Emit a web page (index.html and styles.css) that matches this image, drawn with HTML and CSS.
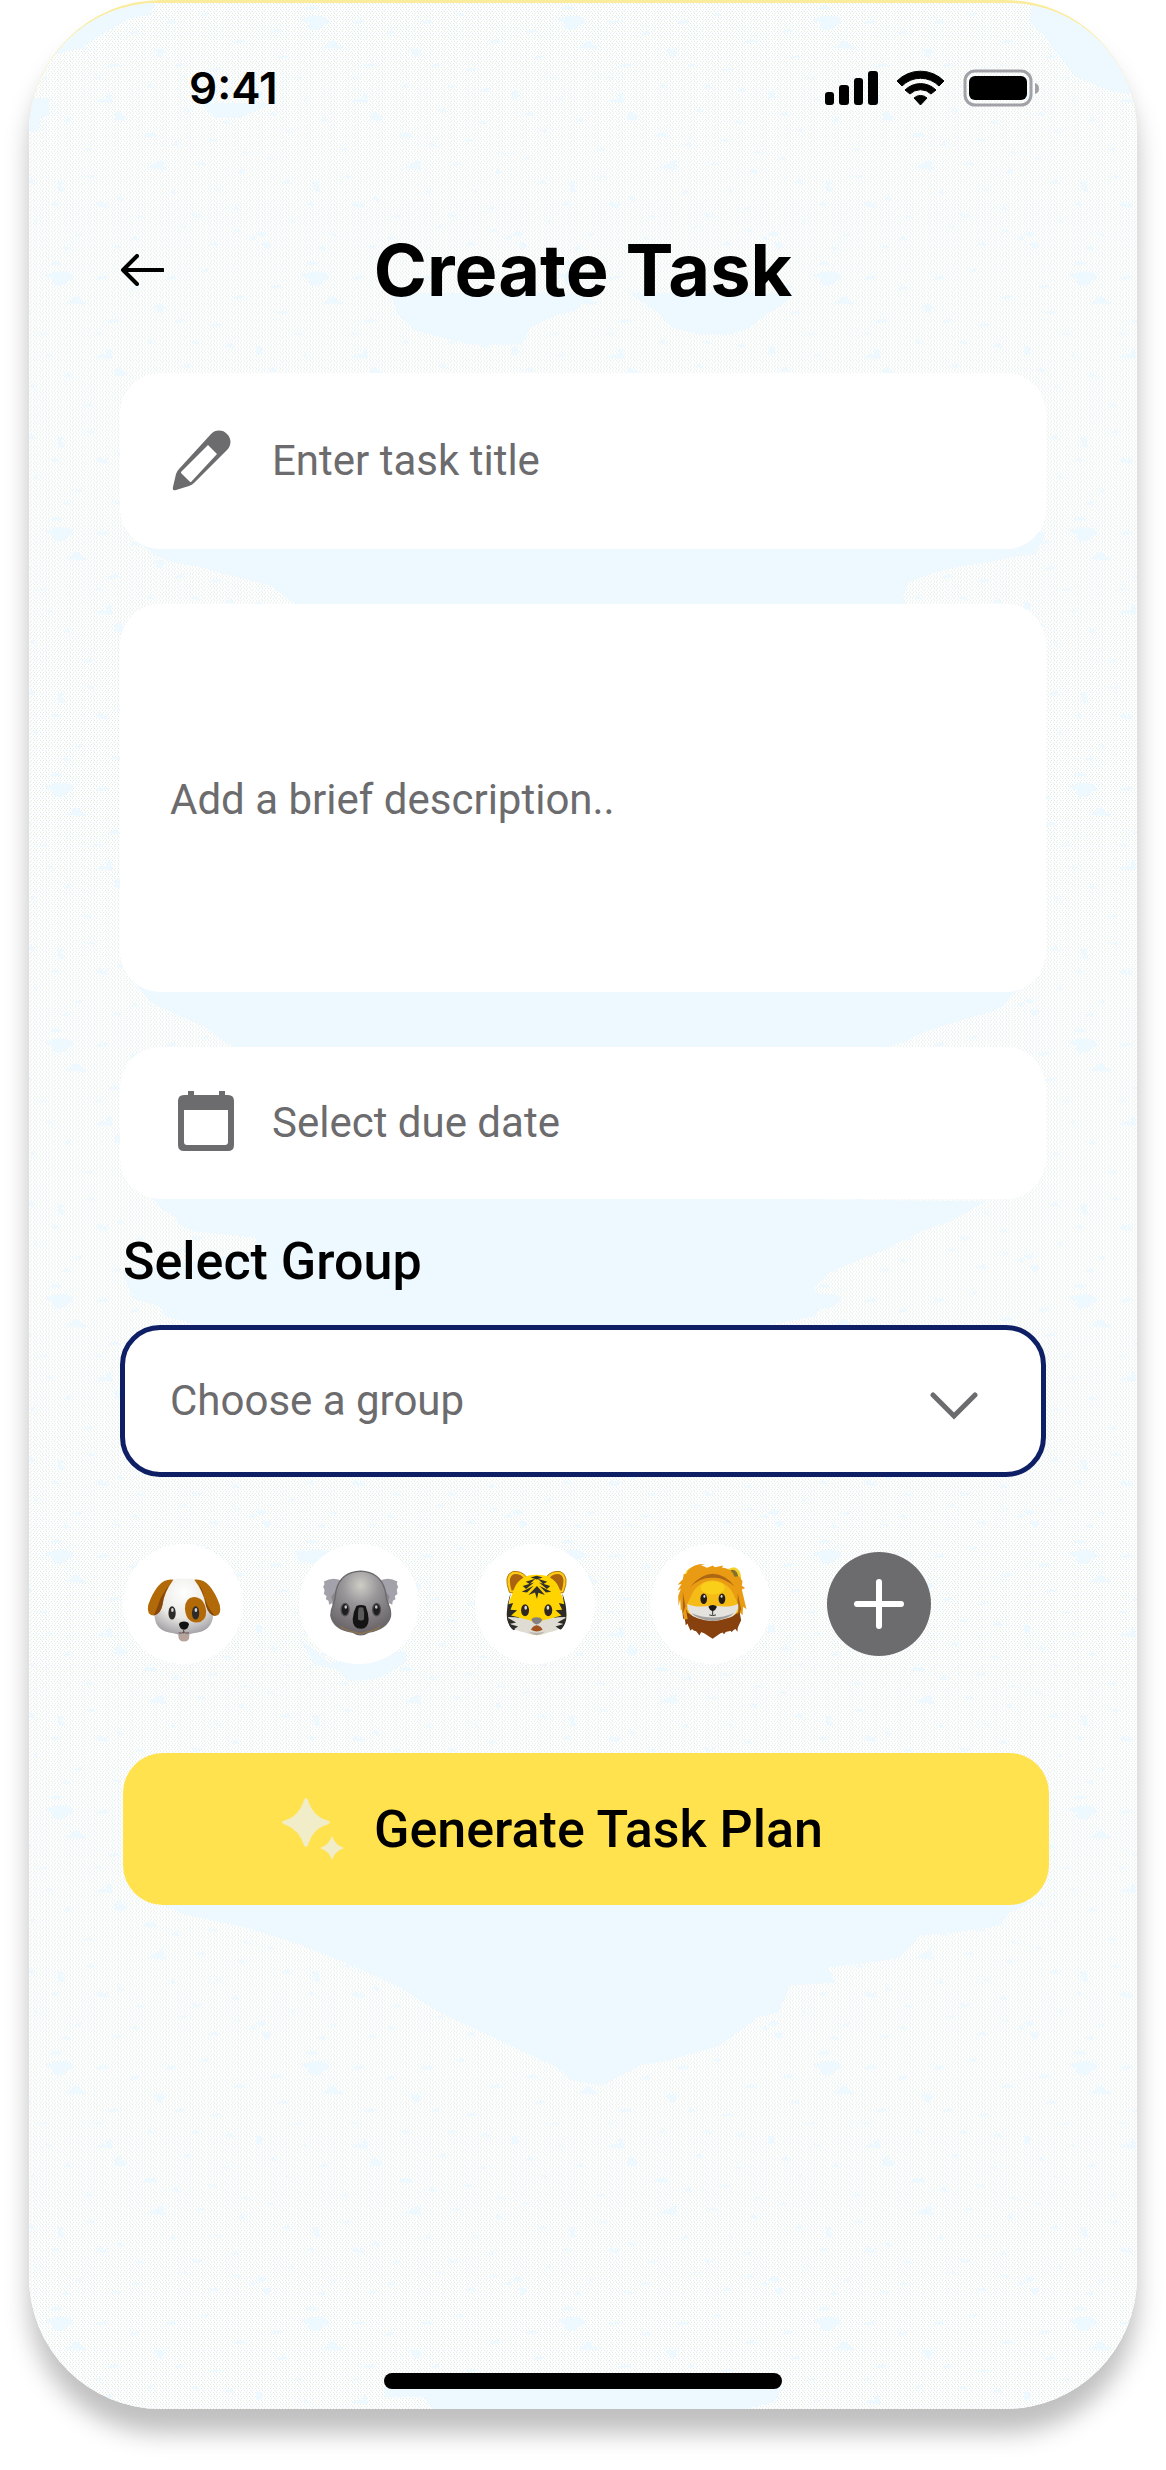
FILE: index.html
```
<!DOCTYPE html>
<html lang="en">

<head>
    <meta charset="UTF-8">
    <meta name="viewport" content="width=device-width, initial-scale=1.0">
    <title>Create Task</title>
    <link rel="stylesheet" href="styles.css">
</head>

<body>
    <div class="phone">
        <!-- Speckled background -->
        <svg class="texture" viewBox="29 0 1108 2409" preserveAspectRatio="none" aria-hidden="true">
            <defs>
                <pattern id="grain" width="6" height="4" patternUnits="userSpaceOnUse" shape-rendering="crispEdges">
                    <rect width="6" height="4" fill="#ffffff" />
                    <path d="M0 0h1v1h-1zM3 0h1v1h-1zM1 2h1v1h-1zM4 2h1v1h-1z" fill="#e6ebe0" />
                    <path d="M2 1h1v1h-1zM5 3h1v1h-1zM0 3h1v1h-1zM4 1h1v1h-1z" fill="#edf8ff" />
                </pattern>
                <pattern id="flecks" width="256" height="256" patternUnits="userSpaceOnUse">
                    <g fill="#edf8ff">
                        <path d="M46 15h6l2-2h12l6 3 1 4-6 2-2 4-8 1-5-3 1-4-7-2z" />
                        <path d="M49 6l4-3h6l4 3zM66 45l5-3 3-4h5l2 4 5 2v2z" />
                        <path d="M156 46h7l2 3-3 5h-4l-1-4-3-2zM96 99l4-3h7v-5h4l1 9z" />
                        <path d="M115 117v-6l4-3 3 4 5 2-4 4zM142 134l4-4h8l3 4zM148 165l6-3 6-4h4v5l2 4z" />
                        <path d="M57 179h6l-1 5 3 5h-6l-1-5zM191 210l4 1 3 2 5-3-3 4-5 1z" />
                        <path d="M0 88h6l1 7-8 1zM0 232l5-4 6 3-4 3zM6 240h8l1 4-5 3zM249 236l5-4 2 5z" />
                        <path d="M96 203l3-5 4 4 5-3-1 6zM118 193l6 4-2 2-5-3zM176 62l6-2 2 3-8 1z" />
                        <path d="M22 54l7-2 4 2-10 2zM96 19l10-2 4 2-12 2zM130 30l6-3 3 3-8 2zM200 12l8-2v3z" />
                        <path d="M210 66l9-1 2 2-11 1zM234 38l7-2 4 3-11 1zM182 108l6-3 3 5zM220 120l8-2 3 3z" />
                        <path d="M28 128l6-2v4zM82 147l9-2 2 3zM196 162l7-3 3 3zM238 170l4-5 4 6zM32 219l6-2v3z" />
                        <path d="M130 236l5-3 3 4zM170 190l4-4 2 5zM74 232l8-2-2 4zM10 156l6-2 3 3zM214 186l6 1 2 4z" />
                        <path d="M178 225l7-2 3 2zM90 75l10-1 3 2zM146 84l5-4 2 5zM44 97l6-2 2 3zM230 206l8-3v4z" />
                        <path d="M14 28l9-2 3 3-11 1zM108 62l8-2 5 3-12 1zM166 18l9-1 2 3-10 1zM224 88l7-4 3 5z" />
                        <path d="M64 118l5-4 3 5zM206 138l9-2 3 3zM26 180l6-4 3 5zM134 214l8-2 3 3zM232 228l8-1 2 3z" />
                        <path d="M50 202l5-3 4 4zM172 142l5-4 3 6zM12 112l6-4 3 5zM84 174l8-2 4 3zM110 244l10-1v3z" />
                        <path d="M190 84l7-2 3 4zM240 150l6-2 4 3zM36 76l9-2 2 2zM60 246l7-3 3 4zM208 242l8-3 3 4z" />
                    </g>
                </pattern>
            </defs>
            <rect x="29" width="1108" height="2409" fill="url(#grain)" />
            <rect x="29" width="1108" height="2409" fill="url(#flecks)" />
            <g fill="#edf8ff">
                <path d="M29 0H155L150 12L130 15L110 27L95 35L80 45L60 50L29 62zM29 95H48L50 112L40 116L39 128H29z" />
                <path d="M1032 0L1030 20L1045 33L1050 42L1065 60L1075 73L1110 88L1137 92V0z" />
                <path d="M200 100H275L260 106L240 115H215z" />
                <path d="M390 290H595L575 308L555 313L530 325L522 342H470L415 328L398 312z" />
                <path d="M630 290H795L780 304L765 312L750 325L730 332H700L672 325L660 312z" />
                <path d="M125 530L155 553L172 560L198 564L230 573L270 583L298 604H907L903 596L908 580L935 570L960 564L990 560L1010 555L1036 552L1046 530z" />
                <path d="M130 975L150 1000L175 1012L203 1024L225 1040L238 1048H880L905 1040L920 1032L940 1025L990 1010L1003 1005L1012 993L1040 975z" />
                <path d="M145 1190L165 1210L175 1213L178 1222L195 1230L256 1236V1250L122 1270L133 1297L160 1305L165 1315L185 1320L195 1326H755L792 1319L815 1315L820 1308L835 1300L813 1288L830 1270L885 1248L920 1230L950 1220L985 1200z" />
                <path d="M155 1900L185 1914L250 1928L300 1944L345 1962L395 1984L440 2012L500 2040L555 2066L572 2080L602 2085L640 2065L668 2060L720 2045L757 2017L778 2012L790 1985L835 1982L828 1967L885 1960L900 1957L920 1935L955 1932L1000 1925L1010 1912L1035 1900z" />
                <path d="M385 2386V2397H424L432 2409H745L775 2402L782 2386z" />
                <path d="M296 1550H330L310 1562L298 1560zM300 1638L330 1662L405 1650L406 1660L392 1670L376 1678L350 1680L336 1668L315 1664L310 1655z" />
            </g>
        </svg>

        <div class="status-bar">
            <span class="time">9:41</span>
            <svg class="status-icons" width="216" height="38" viewBox="824 69 216 38" aria-hidden="true">
                <rect x="825" y="92" width="9" height="13" rx="3" />
                <rect x="839" y="85" width="10" height="20" rx="3" />
                <rect x="854" y="78" width="9" height="27" rx="3" />
                <rect x="868" y="71" width="10" height="34" rx="3" />
                <path d="M897 81a33 33 0 0 1 47 0l-5 5a26 26 0 0 0-37 0z" stroke="#000" stroke-linejoin="round" />
                <path d="M905 90a22 22 0 0 1 31 0l-5 4a15 15 0 0 0-21 0z" stroke="#000" stroke-linejoin="round" />
                <path d="M914 98a9.500 9.500 0 0 1 13 0l-6.500 7z" stroke="#000" stroke-linejoin="round" />
                <rect x="965" y="71" width="66" height="34" rx="10" fill="none" stroke="#a3a1a8" stroke-width="3" />
                <rect x="969" y="76" width="58" height="24" rx="6" />
                <path d="M1035 83q4 1 4 5.500t-4 5.500z" fill="#a3a1a8" />
            </svg>
        </div>

        <div class="header">
            <button type="button" class="back-btn" aria-label="Back">
                <svg width="44" height="32" viewBox="0 0 44 32" aria-hidden="true">
                    <path d="M43 16H3M17 2L3 16l14 14" />
                </svg>
            </button>
            <h1>Create Task</h1>
        </div>

        <form class="task-form">
            <label class="card card-title">
                <svg class="card-icon" width="64" height="64" viewBox="0 0 64 64" aria-hidden="true">
                    <path fill-rule="evenodd" d="M41 5a11 11 0 0 1 16 0 11 11 0 0 1 0 16L24 54q-2 2-5 3L6 61q-4 1-3-3L6 45q1-3 3-5zM38 16L11 43v1l9 9h1L47 25z" />
                    <path d="M8 42l14 13L3 61z" />
                </svg>
                <input type="text" placeholder="Enter task title" aria-label="Task title">
            </label>

            <textarea class="card card-description" placeholder="Add a brief description.." aria-label="Description"></textarea>

            <label class="card">
                <svg class="card-icon" width="64" height="64" viewBox="-7 2 64 64" aria-hidden="true">
                    <path fill-rule="evenodd" d="M14 0q3 0 3 3v3h25V3q0-3 3-3t3 3v3h3q6 0 6 6v44q0 6-6 6H7q-6 0-6-6V12q0-6 6-6h4V3q0-3 3-3zM7 21v32q0 3 3 3h38q3 0 3-3V21z" />
                </svg>
                <input type="text" placeholder="Select due date" aria-label="Due date">
            </label>

            <label class="group-label" for="group">Select Group</label>
            <div class="select-box">
                <select id="group" class="card">
                    <option>Choose a group</option>
                </select>
                <svg class="chevron" width="48" height="28" viewBox="0 0 48 28" aria-hidden="true">
                    <path d="M3 3l21 21L45 3" />
                </svg>
            </div>

            <div class="actions">
                <div class="avatars">
                    <button type="button" class="avatar" aria-label="Dog">
                        <svg viewBox="70 102 362 362" aria-hidden="true">
                            <defs>
                                <radialGradient id="dogFur" cx="50%" cy="25%" r="75%">
                                    <stop offset="0" stop-color="#ffffff" />
                                    <stop offset=".6" stop-color="#eae9e4" />
                                    <stop offset="1" stop-color="#a5a3a8" />
                                </radialGradient>
                            </defs>
                            <path d="M237 368h33v12q0 16-16 16t-17-16z" fill="#b9a49c" />
                            <path d="M190 235q4-29 64-29t64 29q3 30 14 45 10 15 10 35-2 52-60 56-30 10-60 0-55-4-57-54 0-20 12-37 11-14 13-45z" fill="url(#dogFur)" />
                            <path d="M222 210q-46-8-76 76-6 30 17 32 20-4 26-32 6-40 33-76zM285 210q46-8 77 76 6 32-14 33-20-4-28-32-8-42-35-77z" fill="#b26a08" />
                            <path d="M189 286q4-40 28-70-18 22-34 50-8 25-20 52 20-4 26-32zM320 287q-4-40-22-66 8 20 20 46 8 30 30 52-20-2-28-32z" fill="#86470d" />
                            <path d="M283 262q-25 2-26 34 2 42 35 43 30-3 29-36-6-40-38-41z" fill="#b26a08" />
                            <ellipse cx="218" cy="310" rx="11" ry="20" fill="#2c2b29" />
                            <ellipse cx="289" cy="310" rx="11" ry="20" fill="#2c2b29" />
                            <ellipse cx="219" cy="301" rx="4" ry="6" fill="#d5d5d5" />
                            <ellipse cx="290" cy="301" rx="4" ry="6" fill="#d5d5d5" />
                            <path d="M239 344q2-8 15-8t15 8q-2 15-15 17-13-2-15-17z" fill="#111" />
                            <path d="M253 360v12m-15-2q10 4 15-4 5 8 16 4" fill="none" stroke="#6a4a3c" stroke-width="3" />
                        </svg>
                    </button>
                    <button type="button" class="avatar" aria-label="Koala">
                        <svg viewBox="597 102 362 362" aria-hidden="true">
                            <defs>
                                <radialGradient id="koalaFur" cx="50%" cy="22%" r="75%">
                                    <stop offset="0" stop-color="#cfcdc6" />
                                    <stop offset=".4" stop-color="#99969a" />
                                    <stop offset="1" stop-color="#696467" />
                                </radialGradient>
                            </defs>
                            <path d="M672 215q30-16 58 0l-6 66-24 8-4-8-8 4-2-12-8-4 2-10-8-6 2-12-4-10 4-8zM894 215q-30-16-58 0l6 66 22 8 6-8 8 4 2-12 8-4-2-10 8-6-2-12 4-10-4-8z" fill="#a3a1a9" />
                            <path d="M720 226l-26 36 8 20 18-4zM842 226l28 34-6 20-20-2z" fill="#8b878c" />
                            <path d="M783 184q58 2 74 58 2 24 10 44 8 16 6 34-10 38-66 48-24 16-48 0-58-8-66-50 0-16 8-34 6-20 8-42 14-56 74-58z" fill="url(#koalaFur)" stroke="#6c686b" stroke-width="4" />
                            <ellipse cx="736" cy="300" rx="14" ry="21" fill="#555154" />
                            <ellipse cx="831" cy="300" rx="14" ry="21" fill="#555154" />
                            <ellipse cx="736" cy="300" rx="10" ry="17" fill="#1e1e1e" />
                            <ellipse cx="831" cy="300" rx="10" ry="17" fill="#1e1e1e" />
                            <ellipse cx="738" cy="292" rx="4" ry="5" fill="#c5c5c5" />
                            <ellipse cx="830" cy="292" rx="4" ry="5" fill="#c5c5c5" />
                            <path d="M770 289q14-6 28 0 8 20 9 40 0 28-23 29-26-1-25-30 1-20 11-39z" fill="#141414" />
                            <path d="M777 294q8-3 14 0 4 14 2 36-8 6-18 0-1-22 2-36z" fill="#5c5b5c" />
                            <path d="M722 350q26 18 44 18 17 8 34 0 26-4 42-18" fill="none" stroke="#8d754b" stroke-width="4" />
                        </svg>
                    </button>
                    <button type="button" class="avatar" aria-label="Tiger">
                        <svg viewBox="77 102 362 362" aria-hidden="true">
                            <path d="M181 248q-20-52 10-63 26-3 41 16l-30 50zM344 248q20-50-10-63-26-3-42 16l36 50z" fill="#fccc16" stroke="#b97a10" stroke-width="3" />
                            <path d="M188 244q-14-44 6-51 20-2 30 12l-22 30zM338 244q14-44-6-51-20-2-30 12l24 30z" fill="#aa6310" />
                            <path d="M263 195q60 0 72 54 16 30 18 68 0 42-54 50-36 20-72 0-54-10-54-52 4-38 18-66 14-54 72-54z" fill="#ffd400" />
                            <path d="M185 250q-16 40-11 80 6 24 20 32l18-12-16-12 14-14-24-6 18-16-20-2 8-20-14 4zM340 250q16 40 12 80-4 20-16 30l-22-8 14-14-12-14 22-6-18-16 20-2-10-20 16 4z" fill="#2c2b28" />
                            <path d="M177 322q44 0 86 18 40-18 87-18-4 40-50 46-36 16-76 0-42-6-47-46z" fill="#dedcd3" />
                            <path d="M177 325l24 14-20 4 26 8-14 9q-14-12-16-35zM350 325l-24 14 18 4-24 8 14 9q14-12 16-35z" fill="#2c2b28" />
                            <path d="M245 203l18-5 18 5-18 6zM230 216l29-9-17 16zM295 216l-29-9 17 16zM221 229l34-11-24 20zM304 229l-34-11 24 20zM218 246l36-18-20 20zM307 246l-36-18 20 20zM238 256l26-27 24 27-20-7-4 19-6-20z" fill="#31302c" />
                            <ellipse cx="228" cy="302" rx="12" ry="18" fill="#302820" />
                            <ellipse cx="298" cy="302" rx="12" ry="18" fill="#302820" />
                            <ellipse cx="230" cy="294" rx="4" ry="6" fill="#dedede" />
                            <ellipse cx="297" cy="294" rx="4" ry="6" fill="#dedede" />
                            <path d="M247 330q4-7 16-7t17 7q-4 12-17 15-12-3-16-15z" fill="#85807f" />
                            <path d="M246 361q4-12 17-14 13 2 18 14-18 10-35 0z" fill="#a2531f" />
                            <path d="M238 366q25 8 50 0-24 22-50 0z" fill="#b7b3b5" />
                        </svg>
                    </button>
                    <button type="button" class="avatar" aria-label="Lion">
                        <svg viewBox="606 102 362 362" aria-hidden="true">
                            <path d="M699 286l4 44 4-8 4 26 5-6 9 22 9-10 18 24 6-12 34 22 30-21 4 8 15-21 8 14 10-12 8 11 2-40 14-45z" fill="#87410f" />
                            <path d="M709 216q-6-40 24-44l22 8-24 38zM877 216q4-40-22-44l-24 8 22 38z" fill="#f3d12d" />
                            <path d="M716 210q0-30 22-30l10 6-16 28zM870 210q0-30-20-30l-10 6 12 26z" fill="#86712c" />
                            <path d="M757 166l18 8 18-7 5 5 26-5-4 6q32 4 38 28l14-2 10 15-2 14 10 7-10 4 14 60-10-8-2 26-9-10-8 22H706l-6-32-4 6-2-34-5 20-1-30 8-22-10 6 12-20-12 2 16-17 3-16 8 1q5-22 38-30l18-1z" fill="#e99c13" />
                            <path d="M712 300q40 34 80 34t80-34l6 32-10 22-14 8-60 14-58-12-16-14z" fill="#87410f" />
                            <path d="M724 232q30-38 68-40 40 2 66 38-36-30-66-26-36-2-68 28zM868 250l10 50-12 16zM702 246l8 44-8 22z" fill="#ad6614" />
                            <path d="M792 211q50 4 68 54 14 24 8 44-24 22-76 24-50-2-76-24-6-20 8-44 18-50 68-54z" fill="#f5bb17" />
                            <ellipse cx="792" cy="234" rx="36" ry="20" fill="#f9cf19" />
                            <path d="M715 282q24 14 77 5 53 9 77-5 2 36-34 44-44 16-88 0-32-8-32-44z" fill="#e5e3de" />
                            <path d="M727 310q65 28 130 0-20 20-65 24-45-4-65-24z" fill="#a3a0a0" />
                            <ellipse cx="765" cy="267" rx="10" ry="16" fill="#231c12" />
                            <ellipse cx="820" cy="267" rx="10" ry="16" fill="#231c12" />
                            <ellipse cx="767" cy="260" rx="3" ry="4" fill="#dedede" />
                            <ellipse cx="819" cy="260" rx="3" ry="4" fill="#dedede" />
                            <path d="M779 291q4-5 13-5t13 5q-4 11-13 14-9-3-13-14z" fill="#1b1612" />
                            <path d="M792 304v12m-10 0q10 4 20 0" fill="none" stroke="#333" stroke-width="3" />
                        </svg>
                    </button>
                    <button type="button" class="add-btn" aria-label="Add group">
                        <svg width="52" height="52" viewBox="0 0 52 52" aria-hidden="true">
                            <path d="M26 4v44M4 26h44" />
                        </svg>
                    </button>
                </div>

                <button type="submit" class="generate-btn">
                    <svg width="62" height="62" viewBox="0 0 62 62" aria-hidden="true">
                        <path d="M22 2q2-4 4 0 5 16 18 20 8 2 0 5-13 4-18 20-2 4-4 0-5-15-18-20-8-3 0-5 13-4 18-20z" />
                        <path d="M50 38q3 9 12 12-9 3-12 12-3-9-12-12 9-3 12-12z" />
                    </svg>
                    Generate Task Plan
                </button>
            </div>
        </form>

        <div class="home-indicator"></div>
    </div>
</body>

</html>
```
FILE: styles.css
```
* {
    box-sizing: border-box;
}

body {
    font-family: Roboto, "Liberation Sans", sans-serif;
    margin: 0;
    background-color: white;
    color: black;
}

.phone {
    position: relative;
    display: flex;
    flex-direction: column;
    min-height: calc(100vh - 61px);
    margin: 0 29px 61px;
    padding: 57px 91px 20px;
    border-top: 3px solid #fbec9d;
    border-radius: 132px;
    background-color: #fafcfa;
    box-shadow: 0 24px 24px rgba(0, 0, 0, 0.25);
}

.texture {
    position: absolute;
    top: 0;
    left: 0;
    width: 100%;
    height: 100%;
    border-radius: 129px 129px 132px 132px;
}

.status-bar,
.header,
.task-form,
.home-indicator {
    position: relative;
}

/* Status bar */
.status-bar {
    display: flex;
    align-items: center;
    justify-content: space-between;
    height: 56px;
    padding: 0 6px 0 69px;
}

.time {
    font-family: Inter, sans-serif;
    font-size: 44px;
    font-weight: 600;
}

/* Header */
.header {
    display: grid;
    grid-template-columns: 44px 1fr 44px;
    align-items: center;
    margin: 110px 0 59px;
}

.header h1 {
    margin: 0;
    font-family: Inter, sans-serif;
    font-size: 72px;
    font-weight: 700;
    line-height: 88px;
    text-align: center;
}

.back-btn {
    display: flex;
    padding: 0;
    border: none;
    background: none;
    cursor: pointer;
}

.back-btn svg {
    fill: none;
    stroke: black;
    stroke-width: 4;
    stroke-linecap: round;
    stroke-linejoin: round;
}

/* Form */
.task-form {
    display: flex;
    flex-direction: column;
}

.card {
    display: flex;
    align-items: center;
    gap: 38px;
    width: 100%;
    height: 152px;
    margin: 0;
    padding: 0 50px;
    border: none;
    border-radius: 40px;
    background-color: white;
    color: #6c6b6d;
    font-family: inherit;
    font-size: 42px;
    line-height: 56px;
}

.card-title {
    height: 176px;
    margin-bottom: 55px;
}

.card-description {
    height: 388px;
    margin-bottom: 55px;
    padding: 168px 50px 164px;
    resize: none;
}

.card input {
    flex: 1;
    min-width: 0;
    padding: 0;
    border: none;
    outline: none;
    background: none;
    color: inherit;
    font: inherit;
}

.card::placeholder,
.card input::placeholder {
    color: #6c6b6d;
    opacity: 1;
}

.card-icon {
    flex: none;
    fill: #6c6b6d;
}

.group-label {
    margin: 31px 3px;
    font-size: 52px;
    font-weight: 500;
    line-height: 64px;
}

.select-box {
    position: relative;
}

.select-box select {
    appearance: none;
    padding: 0 45px;
    border: 5px solid #0f1f66;
}

.chevron {
    position: absolute;
    top: 67px;
    right: 68px;
    fill: none;
    stroke: #6c6b6d;
    stroke-width: 5;
    stroke-linecap: round;
    pointer-events: none;
}

/* Avatars and submit */
.actions {
    margin: 67px -3px 0 3px;
}

.avatars {
    display: flex;
    align-items: center;
    gap: 56px;
    margin-bottom: 89px;
}

.avatar,
.add-btn {
    display: flex;
    align-items: center;
    justify-content: center;
    width: 120px;
    height: 120px;
    padding: 0;
    border: none;
    border-radius: 50%;
    background-color: white;
    cursor: pointer;
}

.avatar svg {
    width: 100%;
    height: 100%;
}

.add-btn {
    width: 104px;
    height: 104px;
    background-color: #6c6b6d;
}

.add-btn svg {
    stroke: white;
    stroke-width: 6;
    stroke-linecap: round;
}

.generate-btn {
    display: flex;
    align-items: center;
    gap: 30px;
    width: 100%;
    height: 152px;
    padding: 0 159px;
    border: none;
    border-radius: 40px;
    background-color: #ffe24d;
    color: black;
    font-family: inherit;
    font-size: 52px;
    font-weight: 500;
    white-space: nowrap;
    cursor: pointer;
}

.generate-btn svg {
    flex: none;
    fill: #f1edc8;
}

.home-indicator {
    width: 398px;
    height: 16px;
    margin: auto auto 0;
    border-radius: 8px;
    background-color: black;
}
```
